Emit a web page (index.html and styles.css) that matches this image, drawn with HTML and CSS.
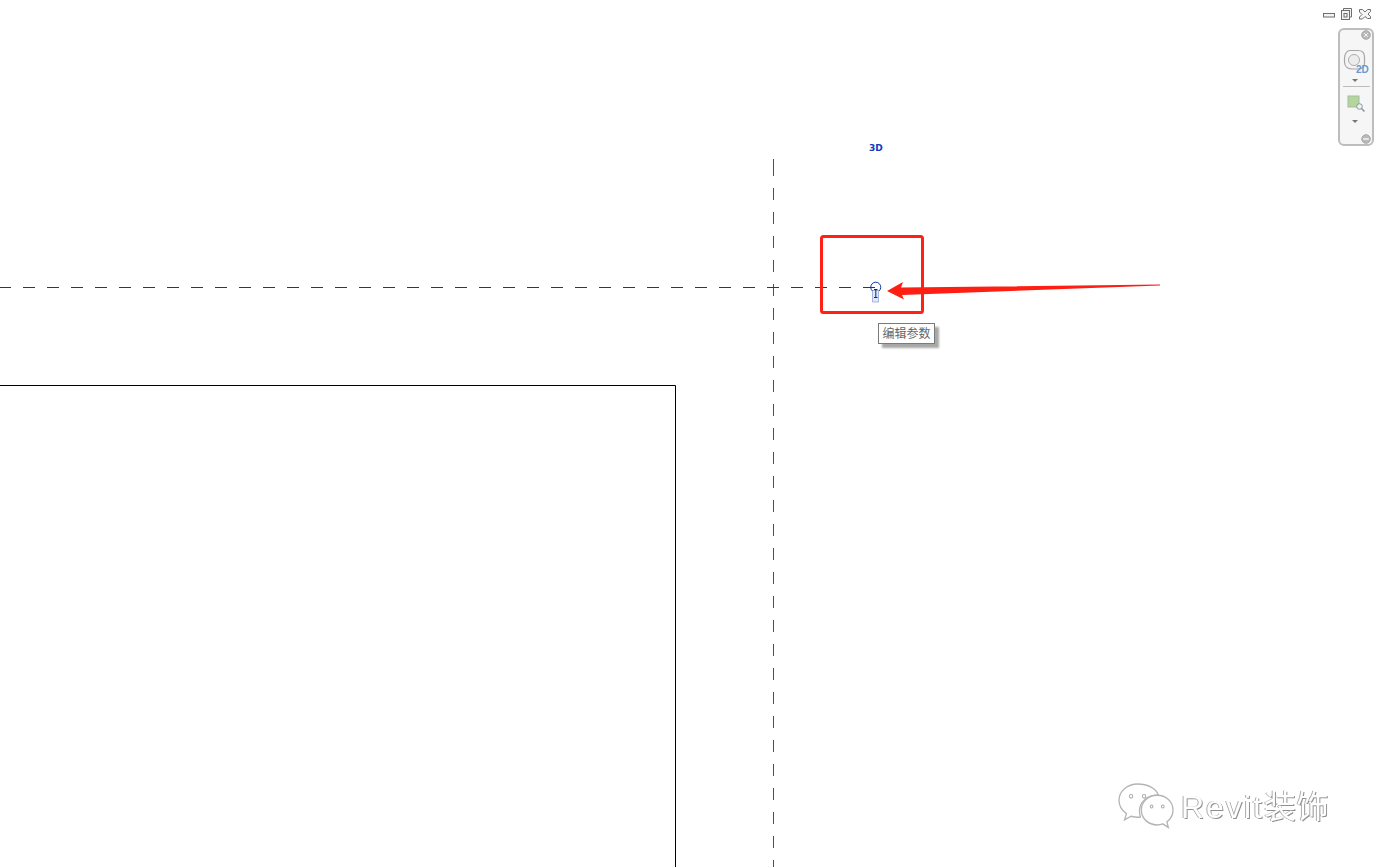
FILE: index.html
```html
<!DOCTYPE html>
<html lang="zh">
<head>
<meta charset="utf-8">
<title>编辑参数</title>
<link rel="stylesheet" href="styles.css">
</head>
<body>
<main class="canvas">
  <svg class="drawing" width="1374" height="867" viewBox="0 0 1374 867">
    <polyline class="outline" points="0,385.5 675.5,385.5 675.5,867"/>
    <line class="ref-v" x1="773.5" y1="159" x2="773.5" y2="176"/>
    <line class="ref-v dashed" x1="773.5" y1="188" x2="773.5" y2="867"/>
    <line class="ref-h dashed" x1="-1" y1="287.5" x2="875" y2="287.5"/>
    <rect class="mark" x="821.5" y="236.5" width="101" height="76" rx="2"/>
    <path class="key-body" d="M872.5 290.5h6v11.500h-6z"/>
    <path class="key-ring" d="M872.500 291a5 5 0 1 1 6.500 0"/>
    <path class="key-bar" d="M874 289.500h3.500M875.800 289.500v8M874 297.500h3.500"/>
    <path class="arrow" d="M887 291 L903 282 L901 287.6 L1160 284.6 L1160 285.6 L902 295 L904 299.500 Z"/>
  </svg>

  <span class="label-3d">3D</span>
  <div class="tooltip">编辑参数</div>

  <div class="win-controls">
    <svg class="win-icon" width="14" height="14" viewBox="0 0 14 14"><rect class="win-line" x="1.5" y="6.5" width="11" height="3.5"/></svg>
    <svg class="win-icon" width="14" height="14" viewBox="0 0 14 14"><path class="win-line" d="M4.5 3.5V1.5h8v8.500h-2"/><rect class="win-line" x="2.500" y="3.500" width="8" height="9"/><rect class="win-line" x="5" y="6.500" width="3" height="3.500"/></svg>
    <svg class="win-icon win-close" width="14" height="14" viewBox="0 0 14 14"><path class="win-line" d="M1.500 2.500h3l2.500 2.500 2.500-2.500h3v2l-2.500 2.500 2.500 2.500v2h-3L7 9.500 4.500 12h-3v-2L4 7.500 1.500 5z"/></svg>
  </div>

  <aside class="navbar">
    <svg class="nav-round close" width="10" height="10" viewBox="0 0 10 10"><circle cx="5" cy="5" r="4.300"/><path class="glyph" d="M3.200 3.200l3.600 3.600M6.800 3.200l-3.600 3.600"/></svg>
    <div class="wheel">
      <svg width="24" height="24" viewBox="0 0 24 24"><path class="wheel-outer" d="M7 1.500h8c4 0 6.500 2.500 6.500 6.500v6c0 4-3 6-7 6h-5c-4.500 0-8-2.500-8-7V9c0-4 2.500-7.500 5.500-7.500z"/><circle class="wheel-inner" cx="11" cy="11" r="5.500"/></svg>
      <span class="label-2d">2D</span>
    </div>
    <span class="caret"></span>
    <hr class="divider">
    <svg class="zoom-icon" width="20" height="20" viewBox="0 0 20 20"><rect class="zoom-sheet" x="1" y="1" width="11" height="11"/><circle class="zoom-lens" cx="12.500" cy="11.500" r="2.800"/><path class="zoom-handle" d="M14.500 13.500l3 3"/></svg>
    <span class="caret lower"></span>
    <svg class="nav-round more" width="10" height="10" viewBox="0 0 10 10"><circle cx="5" cy="5" r="4.300"/><path class="glyph thick" d="M2.200 5h5.600"/></svg>
  </aside>

  <div class="watermark">
    <svg class="wechat" width="54" height="44" viewBox="2 2 58 43" preserveAspectRatio="none">
      <path class="bubble" d="M22 2C11 2 2 9 2 18c0 5.500 3 10 8 13l-2 6 7-3.500c2 .5 4.500 1 7 1 1 0 2 0 3-.2-.7-2-1-3.800-1-5.800 0-9 8.500-15.500 19-15.500h1.500C42 6.500 33 2 22 2z"/>
      <path class="bubble" d="M43 13c-9.500 0-17 6.300-17 14.500S33.500 42 43 42c2 0 4-.3 6-1l6 3.500-1.500-5.500c4-2.700 6.500-6.800 6.500-11.500C60 19.300 52.500 13 43 13z"/>
      <circle class="bubble-eye" cx="15" cy="14" r="1.800"/><circle class="bubble-eye" cx="29" cy="14" r="1.800"/>
      <circle class="bubble-eye" cx="37" cy="24" r="1.500"/><circle class="bubble-eye" cx="49" cy="24" r="1.500"/>
    </svg>
    <span class="wm-text"><span class="wm-latin">Revit</span>装饰</span>
  </div>
</main>
</body>
</html>
```
FILE: styles.css
```css
* { box-sizing: border-box; }
html, body { margin: 0; padding: 0; background: #fff; }
body { width: 1374px; height: 867px; overflow: hidden; font-family: "Liberation Sans", "Noto Sans CJK SC", sans-serif; }
.canvas { position: relative; width: 1374px; height: 867px; overflow: hidden; background: #fff; }
.drawing { position: absolute; left: 0; top: 0; display: block; }
.drawing * { fill: none; }
.outline { stroke: #000; stroke-width: 1; }
.ref-v { stroke: #0b7a1a; stroke-width: 1; }
.ref-h { stroke: #0b38a8; stroke-width: 1; }
.dashed { stroke-dasharray: 12 12; }
.mark { stroke: #ff2116; stroke-width: 3; }
.drawing .arrow { fill: #ff1f12; }
.drawing .key-body { fill: #dfe7f8; stroke: #a3b6e0; stroke-width: 1; }
.key-ring { stroke: #0b38a8; stroke-width: 1; }
.key-bar { stroke: #0a2a80; stroke-width: 1; }

.label-3d { position: absolute; left: 869px; top: 143px; font: bold 9px/11px "DejaVu Sans", sans-serif; color: #0b3ac0; }

.tooltip { position: absolute; left: 878px; top: 323px; width: 57px; height: 21px; border: 1px solid #7a7a7a; background: #fff; box-shadow: 4px 4px 2px #a8a8a8; color: #666; font: 12px/18px "Noto Sans CJK SC", sans-serif; text-align: center; }

.win-controls { position: absolute; left: 1322px; top: 7px; display: flex; gap: 3px; }
.win-icon { display: block; }
.win-close { margin-left: 2px; }
.win-line { fill: #f4f4f4; stroke: #6f6f6f; stroke-width: 1; }

.navbar { position: absolute; left: 1338px; top: 28px; width: 36px; height: 118px; border: 2px solid #bdbdbd; border-radius: 6px; background: #f6f6f6; display: flex; flex-direction: column; align-items: center; padding-top: 18px; }
.nav-round { position: absolute; right: 1px; display: block; }
.nav-round.close { top: 0; }
.nav-round.more { bottom: 0; }
.nav-round circle { fill: #b9b9b9; stroke: #a8a8a8; }
.glyph { fill: none; stroke: #f4f4f4; stroke-width: 1; }
.glyph.thick { stroke-width: 1.500; }
.wheel { position: relative; width: 30px; height: 26px; flex: none; }
.wheel svg { position: absolute; left: 2px; top: 1px; display: block; }
.wheel-outer { fill: #f4f4f4; stroke: #a6a6a6; stroke-width: 1.200; }
.wheel-inner { fill: #ececec; stroke: #adadad; stroke-width: 1; }
.label-2d { position: absolute; left: 15px; top: 16px; font: bold 10px/11px "Liberation Sans", sans-serif; color: #6a9acf; }
.caret { width: 0; height: 0; margin-top: 5px; margin-left: -2px; border-left: 3px solid transparent; border-right: 3px solid transparent; border-top: 3px solid #777; flex: none; }
.caret.lower { margin-top: 5px; }
.divider { width: 27px; height: 1px; margin: 4px 0 0; border: 0; background: #bdbdbd; flex: none; }
.zoom-icon { display: block; margin: 8px 0 0 2px; flex: none; }
.zoom-sheet { fill: #b5d4a0; stroke: #a3c093; stroke-width: 1; }
.zoom-lens { fill: #eef2f4; stroke: #8d979c; stroke-width: 1; }
.zoom-handle { fill: none; stroke: #8d979c; stroke-width: 1.600; }

.watermark { position: absolute; left: 1119px; top: 784px; display: flex; align-items: flex-start; gap: 8px; }
.wechat { display: block; flex: none; overflow: visible; }
.bubble { fill: #fff; stroke: #b4b4b4; stroke-width: 1.400; }
.bubble-eye { fill: #fff; stroke: #a8a8a8; stroke-width: 1; }
.wm-text { font: 32px/46px "Liberation Sans", "Noto Sans CJK SC", sans-serif; color: #fff; text-shadow: -1px 0 0 #aaa, 1px 1px 0 #909090; will-change: transform; white-space: nowrap; letter-spacing: .6px; }
.wm-latin { letter-spacing: 2px; }
```
